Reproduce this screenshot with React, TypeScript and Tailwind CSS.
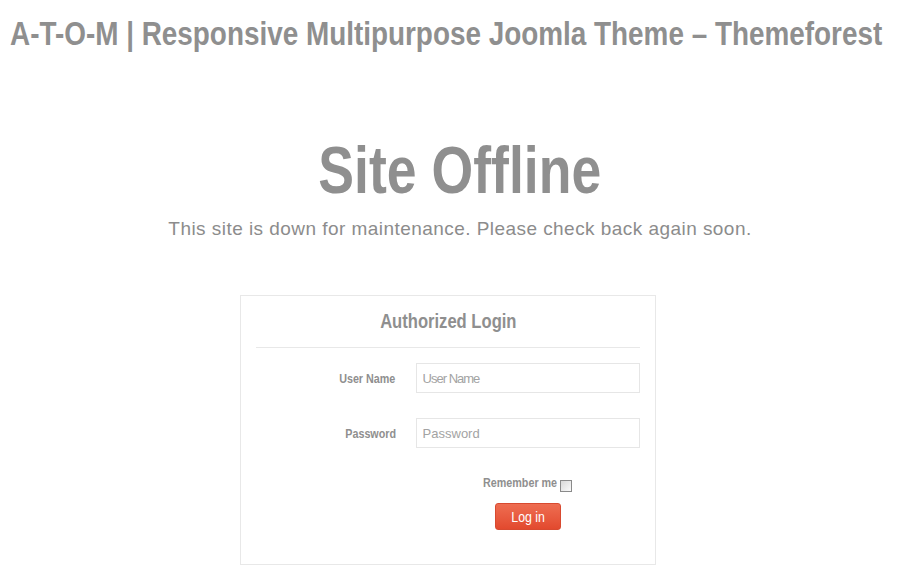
import React from "react";

const sans = { fontFamily: '"Liberation Sans", Arial, sans-serif' };

export default function App() {
  return (
    <div className="w-[900px] h-[574px] bg-white overflow-hidden text-[#8f8f8f]" style={sans}>
      <div className="pl-[10px] pt-[14px] h-[52px] whitespace-nowrap">
        <h1 className="inline-block origin-left scale-x-[0.82] text-[34px] leading-[38px] font-bold">
          A-T-O-M | Responsive Multipurpose Joomla Theme – Themeforest
        </h1>
      </div>
      <div className="flex flex-col items-center mt-[80px] pl-[20px]">
        <h2 className="inline-block scale-x-[0.8] text-[67px] leading-[76px] font-bold whitespace-nowrap">Site Offline</h2>
        <p className="mt-[10px] text-[19px] leading-[22px] tracking-[0.45px] text-[#8c8c8c]">
          This site is down for maintenance. Please check back again soon.
        </p>
      </div>
      <div className="ml-[240px] mt-[55px] w-[416px] h-[270px] border border-[#e8e8e8] px-[15px]">
        <div className="text-center pt-[13px] pb-[12px] border-b border-[#e8e8e8]">
          <span className="inline-block scale-x-[0.79] text-[21px] leading-[24px] font-bold whitespace-nowrap">Authorized Login</span>
        </div>
        <div className="flex items-center mt-[15px]">
          <div className="w-[140px] text-right">
            <label className="inline-block origin-right scale-x-[0.86] text-[12.5px] leading-[15px] font-bold whitespace-nowrap">User Name</label>
          </div>
          <input
            className="ml-[20px] w-[225px] h-[30px] border border-[#e6e6e6] px-[6px] text-[13px] tracking-[-1px] outline-none placeholder-[#a3a3a3]"
            placeholder="User Name"
          />
        </div>
        <div className="flex items-center mt-[25px]">
          <div className="w-[140px] text-right">
            <label className="inline-block origin-right scale-x-[0.86] text-[12.5px] leading-[15px] font-bold whitespace-nowrap">Password</label>
          </div>
          <input
            className="ml-[20px] w-[225px] h-[30px] border border-[#e6e6e6] px-[6px] text-[13px] outline-none placeholder-[#a3a3a3]"
            placeholder="Password"
          />
        </div>
        <div className="flex">
          <div className="w-[160px]" />
          <div className="w-[225px] flex flex-col items-center mt-[27px]">
            <div className="flex items-center">
              <span className="inline-block origin-left scale-x-[0.86] text-[12.5px] leading-[15px] font-bold whitespace-nowrap -mr-[12.5px]">Remember me</span>
              <span className="ml-[3px] mt-[5px] w-[12px] h-[12px] border border-[#8a8a8a] bg-gradient-to-br from-[#d8d8d8] to-[#fafafa]" />
            </div>
            <button className="mt-[11px] w-[66px] h-[27px] rounded-[3px] text-white bg-gradient-to-b from-[#ee6d51] to-[#e2492e] border border-[#d84a30] flex items-center justify-center">
              <span className="inline-block scale-x-[0.88] text-[14px] leading-[16px] whitespace-nowrap">Log in</span>
            </button>
          </div>
        </div>
      </div>
    </div>
  );
}
